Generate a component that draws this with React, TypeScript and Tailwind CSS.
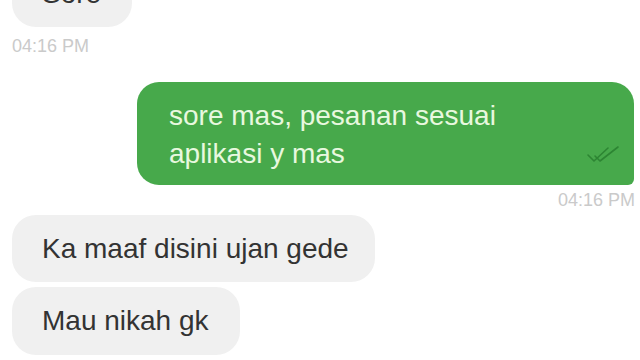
import React from "react";

function DoubleCheck() {
  return (
    <svg width="34" height="20" viewBox="0 0 34 20" fill="none">
      <path d="M2 10 L8 16 L22 3" stroke="#2d8533" strokeWidth="1.6" strokeLinecap="round" strokeLinejoin="round" />
      <path d="M9 11 L14 16 L32 2" stroke="#2d8533" strokeWidth="1.6" strokeLinecap="round" strokeLinejoin="round" />
    </svg>
  );
}

export default function App() {
  return (
    <div
      className="w-[640px] h-[360px] overflow-hidden bg-white flex flex-col"
      style={{ fontFamily: '"Liberation Sans", Arial, sans-serif' }}
    >
      <div className="ml-[12px] mt-[-40px] h-[67px] w-[120px] shrink-0 rounded-[24px] bg-[#f0f0f0] flex items-center pl-[30px] text-[28px] leading-[38px] text-[#333333]">
        Sore
      </div>
      <div className="ml-[12px] mt-[10px] text-[18px] leading-[18px] text-[#cacaca]">04:16 PM</div>

      <div className="relative self-end mr-[6px] mt-[27px] w-[497px] h-[103px] shrink-0 rounded-[22px] rounded-br-[6px] bg-[#47a94b] pl-[32px] pt-[15px] text-[28px] leading-[38px] text-[#e8f8df]">
        <div>sore mas, pesanan sesuai</div>
        <div>aplikasi y mas</div>
        <div className="absolute left-[449px] top-[63px]">
          <DoubleCheck />
        </div>
      </div>
      <div className="self-end mr-[5px] mt-[6px] text-[18px] leading-[18px] text-[#cacaca]">04:16 PM</div>

      <div className="ml-[12px] mt-[6px] h-[67px] w-[363px] shrink-0 rounded-[24px] bg-[#f0f0f0] flex items-center pl-[30px] text-[28px] leading-[38px] text-[#333333]">
        Ka maaf disini ujan gede
      </div>
      <div className="ml-[12px] mt-[5px] h-[68px] w-[228px] shrink-0 rounded-[24px] bg-[#f0f0f0] flex items-center pl-[30px] text-[28px] leading-[38px] text-[#333333]">
        Mau nikah gk
      </div>
    </div>
  );
}
